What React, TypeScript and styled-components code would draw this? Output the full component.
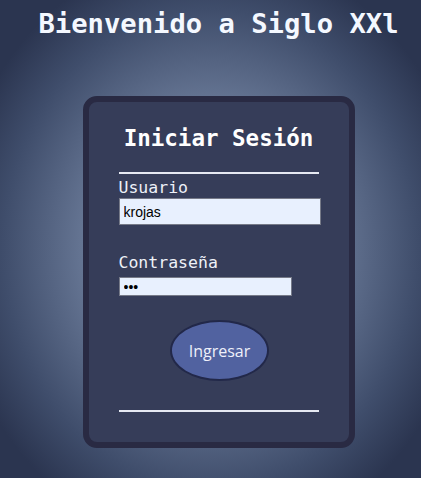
import React from "react";
import styled, { createGlobalStyle } from "styled-components";

const Global = createGlobalStyle`
  html, body { margin: 0; padding: 0; }
  body {
    width: 421px;
    height: 478px;
    overflow: hidden;
    background: radial-gradient(ellipse 260px 300px at 50% 52%, #8595b3 0%, #6a7a98 45%, #3f4d6b 80%, #2b3550 100%);
    background-color: #2b3550;
  }
`;

const Page = styled.div`
  width: 421px;
  height: 478px;
  display: flex;
  flex-direction: column;
  align-items: center;
`;

const Title = styled.h1`
  margin: 8px 0 0 16px;
  font-family: "DejaVu Sans Mono", monospace;
  font-weight: bold;
  font-size: 27.2px;
  line-height: 32px;
  color: #f4f8ff;
  white-space: nowrap;
`;

const Card = styled.div`
  margin-top: 56px;
  margin-left: 16px;
  box-sizing: border-box;
  width: 272px;
  height: 352px;
  background: #363d59;
  border: 6px solid #292a43;
  border-radius: 14px;
  display: flex;
  flex-direction: column;
  align-items: center;
  padding-top: 22px;
`;

const Heading = styled.h2`
  margin: 0;
  font-family: "DejaVu Sans Mono", monospace;
  font-weight: bold;
  font-size: 22.5px;
  line-height: 28px;
  color: #ffffff;
`;

const Form = styled.form`
  width: 202px;
  margin-left: 2px;
  display: flex;
  flex-direction: column;
`;

const Spacer = styled.div<{ $h: number }>`
  height: ${(p) => p.$h}px;
  flex: none;
`;

const Rule = styled.div`
  width: 200px;
  height: 2px;
  background: #e6e9f2;
`;

const Label = styled.label`
  font-family: "DejaVu Sans Mono", monospace;
  font-size: 16.5px;
  line-height: 20px;
  color: #eef1f8;
`;

const Input = styled.input<{ $w: number; $h: number }>`
  box-sizing: border-box;
  width: ${(p) => p.$w}px;
  height: ${(p) => p.$h}px;
  margin: 0;
  padding: 0 4px;
  background: #e8f0fe;
  border: 1px solid #767a88;
  font-family: "Liberation Sans", Arial, sans-serif;
  font-size: 14px;
  color: #000;
  outline: none;
`;

const ButtonRow = styled.div`
  display: flex;
  justify-content: center;
  margin-top: 24px;
`;

const Button = styled.button`
  box-sizing: border-box;
  width: 99px;
  height: 61px;
  border-radius: 50%;
  background: #5162a0;
  border: 2px solid #222849;
  color: #eef0fa;
  font-family: "Open Sans", "Noto Sans", sans-serif;
  font-size: 16px;
  padding: 0;
  margin-left: 0px;
`;

export default function App() {
  return (
    <>
      <Global />
      <Page>
        <Title>Bienvenido a Siglo XXl</Title>
        <Card>
          <Heading>Iniciar Sesión</Heading>
          <Form onSubmit={(e) => e.preventDefault()}>
            <Spacer $h={20} />
            <Rule />
            <Spacer $h={4} />
            <Label>Usuario</Label>
            <Input $w={202} $h={27} defaultValue="krojas" />
            <Spacer $h={28} />
            <Label>Contraseña</Label>
            <Spacer $h={4} />
            <Input $w={173} $h={19} type="password" defaultValue="abc" />
            <ButtonRow>
              <Button type="submit">Ingresar</Button>
            </ButtonRow>
            <Spacer $h={29} />
            <Rule />
          </Form>
        </Card>
      </Page>
    </>
  );
}
